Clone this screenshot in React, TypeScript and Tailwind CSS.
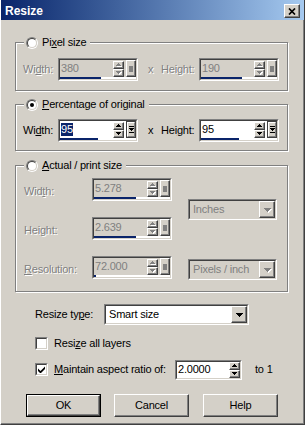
import type { ReactNode } from 'react';

// 经典 Win2000 风格对话框的凸起/凹陷边框
const RAISED =
  'border border-t-white border-l-white border-r-[#404040] border-b-[#404040] shadow-[inset_-1px_-1px_0_#808080] bg-[#d4d0c8]';
const SUNKEN_OUT = 'border border-t-[#808080] border-l-[#808080] border-r-white border-b-white';
const SUNKEN_IN = 'border border-t-[#404040] border-l-[#404040] border-r-[#d4d0c8] border-b-[#d4d0c8]';
const GRAY_TEXT = 'text-[#808080] [text-shadow:1px_1px_0_#fff]';

// 像素三角箭头
function Arrow({ up = false, w = 5, color = '#000', emboss = false }: { up?: boolean; w?: number; color?: string; emboss?: boolean }) {
  const h = (w + 1) / 2;
  const rows = Array.from({ length: h }, (_, i) => i);
  return (
    <svg
      width={w}
      height={h}
      viewBox={`0 0 ${w} ${h}`}
      shapeRendering="crispEdges"
      className={emboss ? '[filter:drop-shadow(1px_1px_0_#fff)]' : ''}
    >
      {rows.map((i) => (
        <rect key={i} x={i} y={up ? h - 1 - i : i} width={w - 2 * i} height={1} fill={color} />
      ))}
    </svg>
  );
}

function Label({ children, disabled, className = '' }: { children: ReactNode; disabled?: boolean; className?: string }) {
  return <span className={`${disabled ? GRAY_TEXT : 'text-black'} ${className}`}>{children}</span>;
}

function Spin({ disabled }: { disabled?: boolean }) {
  const color = disabled ? '#808080' : '#000';
  return (
    <div className="flex flex-col">
      <div className={`flex h-[8px] w-[11px] items-center justify-center ${RAISED}`}>
        <Arrow up w={5} color={color} emboss={disabled} />
      </div>
      <div className={`flex h-[8px] w-[11px] items-center justify-center ${RAISED}`}>
        <Arrow w={5} color={color} emboss={disabled} />
      </div>
    </div>
  );
}

function Popup({ disabled }: { disabled?: boolean }) {
  if (disabled) {
    return (
      <div className={`flex h-[17px] w-[10px] items-center justify-center ${RAISED}`}>
        <div className="h-[6px] w-[4px] bg-[#808080]" />
      </div>
    );
  }
  return (
    <div className="h-[17px] w-[10px] border border-[#404040]">
      <div className="flex h-full w-full items-center justify-center border border-t-white border-l-white border-r-[#808080] border-b-[#808080] bg-[#d4d0c8]">
        <svg width="5" height="7" viewBox="0 0 5 7" shapeRendering="crispEdges">
          <rect x="0" y="0" width="5" height="1" fill="#000" />
          <rect x="0" y="2" width="5" height="1" fill="#000" />
          <rect x="1" y="3" width="3" height="1" fill="#000" />
          <rect x="2" y="4" width="1" height="1" fill="#000" />
          <rect x="0" y="6" width="5" height="1" fill="#000" />
        </svg>
      </div>
    </div>
  );
}

// 带滑块指示条的数值输入框
function NumEdit({ value, disabled, bar, selected }: { value: string; disabled?: boolean; bar: number; selected?: boolean }) {
  return (
    <div className={`h-[23px] w-[80px] ${SUNKEN_OUT}`}>
      <div className={`flex h-full flex-col ${SUNKEN_IN} ${disabled ? 'bg-[#d4d0c8]' : 'bg-white'}`}>
        <div className="flex min-h-0 flex-1 items-center">
          <div className="flex-1 pl-[1px]">
            {selected ? (
              <span className="inline-block bg-[#0a246a] leading-[13px] text-white">{value}</span>
            ) : (
              <span className={`inline-block leading-[13px] ${disabled ? 'text-[#808080]' : 'text-black'}`}>{value}</span>
            )}
          </div>
          <Spin disabled={disabled} />
          <div className="ml-[2px]">
            <Popup disabled={disabled} />
          </div>
        </div>
        <div className="h-[2px] bg-white">
          <div className="h-full bg-[#0a246a]" style={{ width: bar }} />
        </div>
      </div>
    </div>
  );
}

function Combo({ value, disabled, className = '' }: { value: string; disabled?: boolean; className?: string }) {
  return (
    <div className={`h-[21px] ${SUNKEN_OUT} ${className}`}>
      <div className={`flex h-full items-center ${SUNKEN_IN} ${disabled ? 'bg-[#d4d0c8]' : 'bg-white'}`}>
        <span className={`flex-1 pl-[3px] ${disabled ? 'text-[#808080]' : 'text-black'}`}>{value}</span>
        <div className={`flex h-[17px] w-[16px] items-center justify-center ${RAISED}`}>
          <Arrow w={7} color={disabled ? '#808080' : '#000'} emboss={disabled} />
        </div>
      </div>
    </div>
  );
}

function Radio({ checked }: { checked?: boolean }) {
  return (
    <div className="h-[12px] w-[12px] rounded-full border border-t-[#808080] border-l-[#808080] border-r-white border-b-white">
      <div className="flex h-full w-full items-center justify-center rounded-full border border-t-[#404040] border-l-[#404040] border-r-[#d4d0c8] border-b-[#d4d0c8] bg-white">
        {checked && <div className="h-[4px] w-[4px] rounded-full bg-black" />}
      </div>
    </div>
  );
}

function Checkbox({ checked }: { checked?: boolean }) {
  return (
    <div className={`h-[13px] w-[13px] ${SUNKEN_OUT}`}>
      <div className={`flex h-full w-full items-center justify-center bg-white ${SUNKEN_IN}`}>
        {checked && (
          <svg width="7" height="7" viewBox="0 0 7 7">
            <polygon points="0,2.5 2.5,5 7,0.5 7,3 2.5,7.5 0,5" fill="#000" />
          </svg>
        )}
      </div>
    </div>
  );
}

function Group({ checked, title, children, className = '' }: { checked?: boolean; title: ReactNode; children: ReactNode; className?: string }) {
  return (
    <div className={`w-[273px] border border-[#808080] shadow-[inset_1px_1px_0_#fff,1px_1px_0_#fff] ${className}`}>
      <div className="-mt-[8px] ml-[8px] flex h-[15px] w-fit items-center gap-[4px] bg-[#d4d0c8] pl-[2px] pr-[4px]">
        <Radio checked={checked} />
        <span className="text-black">{title}</span>
      </div>
      {children}
    </div>
  );
}

function Button({ children, isDefault, className = '' }: { children: ReactNode; isDefault?: boolean; className?: string }) {
  const inner = <div className={`flex h-full w-full items-center justify-center text-black ${RAISED}`}>{children}</div>;
  return (
    <div className={`h-[23px] w-[75px] ${isDefault ? 'border border-black' : ''} ${className}`}>{inner}</div>
  );
}

export default function App() {
  return (
    <div className="h-[425px] w-[305px] overflow-hidden border-r border-b border-l border-l-white border-r-[#404040] border-b-[#404040] bg-[#d4d0c8] font-['Liberation_Sans',Arial,sans-serif] text-[11px] tracking-[-0.2px] shadow-[inset_-1px_-1px_0_#808080]">
      {/* 标题栏 */}
      <div className="flex h-[20px] items-center justify-between bg-linear-to-r from-[#0a246a] to-[#a6caf0] pt-[2px] pr-[4px] pl-[4px]">
        <span className="text-[12px] font-bold tracking-normal text-white">Resize</span>
        <div className={`flex h-[14px] w-[16px] items-center justify-center ${RAISED}`}>
          <svg width="8" height="7" viewBox="0 0 8 7">
            <path d="M1 0.5L7 6.5M7 0.5L1 6.5" stroke="#000" strokeWidth="1.7" />
          </svg>
        </div>
      </div>

      <div className="pl-[14px]">
        {/* 像素尺寸 */}
        <Group className="mt-[22px] pb-[9px]" title={<>Pi<u>x</u>el size</>}>
          <div className="mt-[8px] flex items-center pl-[7px]">
            <Label disabled className="w-[35px]">Wi<u>d</u>th:</Label>
            <NumEdit value="380" disabled bar={41} />
            <Label disabled className="ml-[10px] w-[13px]">x</Label>
            <Label disabled className="w-[38px]">Hei<u>g</u>ht:</Label>
            <NumEdit value="190" disabled bar={41} />
          </div>
        </Group>

        {/* 百分比 */}
        <Group checked className="mt-[13px] pb-[8px]" title={<><u>P</u>ercentage of original</>}>
          <div className="mt-[7px] flex items-center pl-[7px]">
            <Label className="w-[35px]">Wi<u>d</u>th:</Label>
            <NumEdit value="95" selected bar={38} />
            <Label className="ml-[10px] w-[13px]">x</Label>
            <Label className="w-[38px]">Hei<u>g</u>ht:</Label>
            <NumEdit value="95" bar={38} />
          </div>
        </Group>

        {/* 实际/打印尺寸 */}
        <Group className="mt-[14px] pb-[11px]" title={<><u>A</u>ctual / print size</>}>
          <div className="mt-[5px] flex pl-[8px]">
            <div className="flex flex-col gap-[16px]">
              <div className="flex h-[23px] items-center">
                <Label disabled className="w-[68px] pt-[3px]">Wid<u>t</u>h:</Label>
                <NumEdit value="5.278" disabled bar={42} />
              </div>
              <div className="flex h-[23px] items-center">
                <Label disabled className="w-[68px] pt-[3px]">Hei<u>g</u>ht:</Label>
                <NumEdit value="2.639" disabled bar={42} />
              </div>
              <div className="flex h-[23px] items-center">
                <Label disabled className="w-[68px] pt-[3px]"><u>R</u>esolution:</Label>
                <NumEdit value="72.000" disabled bar={2} />
              </div>
            </div>
            <div className="ml-[16px] flex flex-col">
              <Combo className="mt-[21px] w-[89px]" value="Inches" disabled />
              <Combo className="mt-[39px] w-[89px]" value="Pixels / inch" disabled />
            </div>
          </div>
        </Group>

        {/* 缩放类型 */}
        <div className="mt-[12px] flex items-center pl-[20px]">
          <Label className="w-[69px]">Resize ty<u>p</u>e:</Label>
          <Combo className="w-[145px]" value="Smart size" />
        </div>

        <div className="mt-[10px] flex items-center gap-[6px] pl-[20px]">
          <Checkbox />
          <Label>Resi<u>z</u>e all layers</Label>
        </div>

        <div className="mt-[8px] flex h-[20px] items-center pl-[20px]">
          <Checkbox checked />
          <Label className="ml-[6px] w-[121px]"><u>M</u>aintain aspect ratio of:</Label>
          <div className={`h-[20px] w-[67px] ${SUNKEN_OUT}`}>
            <div className={`flex h-full items-center bg-white ${SUNKEN_IN}`}>
              <span className="flex-1 pl-[1px] text-black">2.0000</span>
              <Spin />
            </div>
          </div>
          <Label className="ml-[13px]">to 1</Label>
        </div>

        {/* 按钮 */}
        <div className="mt-[14px] flex pl-[11px]">
          <Button isDefault>OK</Button>
          <Button className="ml-[13px]">Cancel</Button>
          <Button className="ml-[14px]">Help</Button>
        </div>
      </div>
    </div>
  );
}
